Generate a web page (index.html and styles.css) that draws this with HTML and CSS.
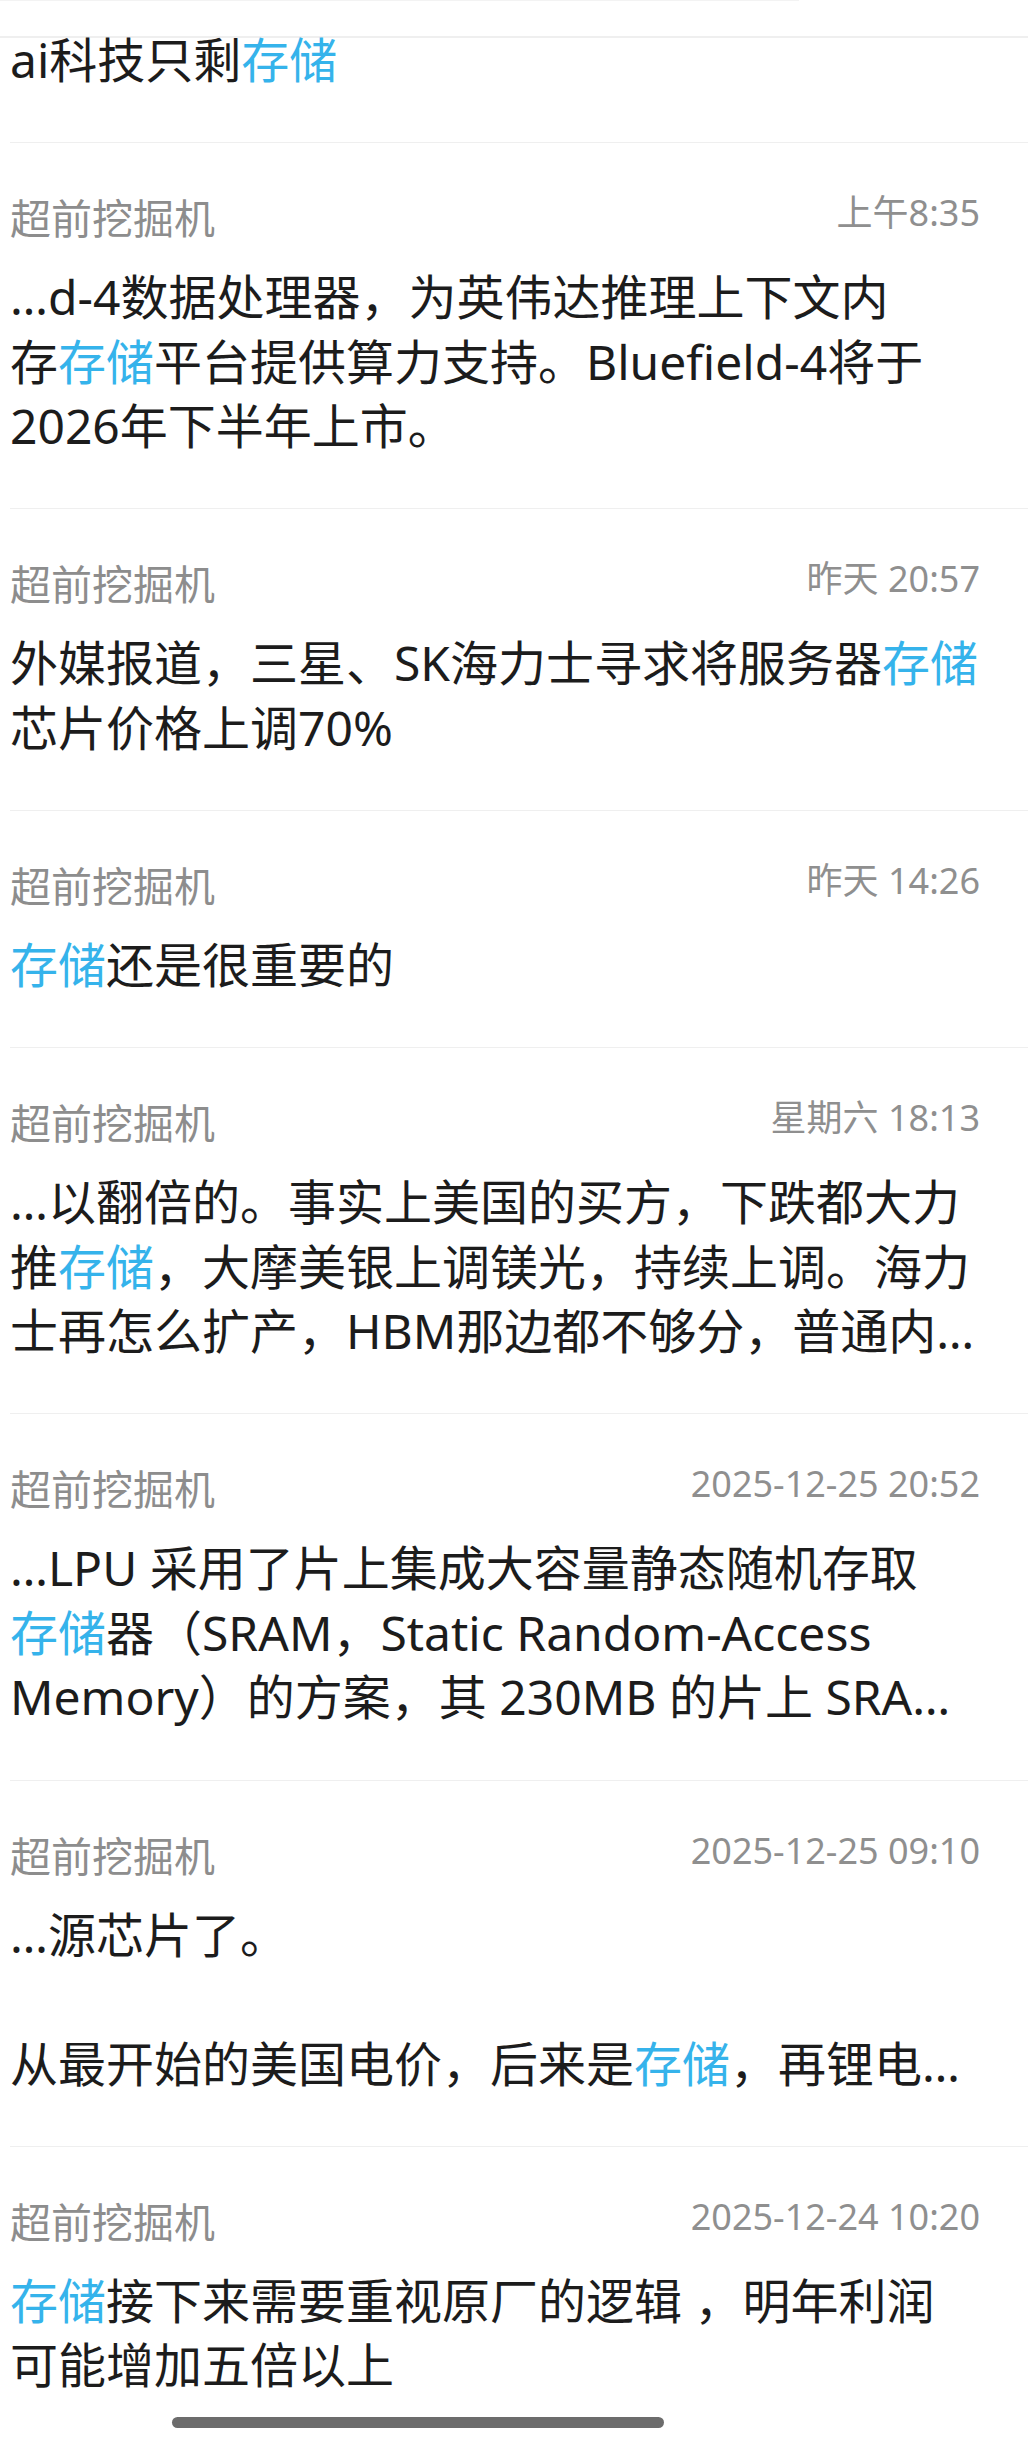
FILE: index.html
```html
<!DOCTYPE html>
<html lang="zh-CN">
<head>
<meta charset="utf-8">
<title>搜索结果</title>
<link rel="stylesheet" href="styles.css">
</head>
<body>
<div class="page">
  <div class="header"><div class="hdr-line"></div></div>

  <div class="item partial">
    <div class="body">ai科技只剩<span class="hl">存储</span></div>
  </div>

  <div class="item">
    <div class="meta"><span class="name">超前挖掘机</span><span class="time">上午8:35</span></div>
    <div class="body">…d-4数据处理器，为英伟达推理上下文内<br>存<span class="hl">存储</span>平台提供算力支持。Bluefield-4将于<br>2026年下半年上市。</div>
  </div>

  <div class="item">
    <div class="meta"><span class="name">超前挖掘机</span><span class="time">昨天 20:57</span></div>
    <div class="body">外媒报道，三星、SK海力士寻求将服务器<span class="hl">存储</span><br>芯片价格上调70%</div>
  </div>

  <div class="item">
    <div class="meta"><span class="name">超前挖掘机</span><span class="time">昨天 14:26</span></div>
    <div class="body"><span class="hl">存储</span>还是很重要的</div>
  </div>

  <div class="item">
    <div class="meta"><span class="name">超前挖掘机</span><span class="time">星期六 18:13</span></div>
    <div class="body">…以翻倍的。事实上美国的买方，下跌都大力<br>推<span class="hl">存储</span>，大摩美银上调镁光，持续上调。海力<br>士再怎么扩产，HBM那边都不够分，普通内…</div>
  </div>

  <div class="item">
    <div class="meta"><span class="name">超前挖掘机</span><span class="time">2025-12-25 20:52</span></div>
    <div class="body">…LPU 采用了片上集成大容量静态随机存取<br><span class="hl">存储</span>器（SRAM，Static Random-Access<br>Memory）的方案，其 230MB 的片上 SRA…</div>
  </div>

  <div class="item">
    <div class="meta"><span class="name">超前挖掘机</span><span class="time">2025-12-25 09:10</span></div>
    <div class="body">…源芯片了。<br><br>从最开始的美国电价，后来是<span class="hl">存储</span>，再锂电…</div>
  </div>

  <div class="item">
    <div class="meta"><span class="name">超前挖掘机</span><span class="time">2025-12-24 10:20</span></div>
    <div class="body"><span class="hl">存储</span>接下来需要重视原厂的逻辑 ，明年利润<br>可能增加五倍以上</div>
  </div>

  <div class="home-bar"></div>
</div>
</body>
</html>
```

FILE: styles.css
```css
html, body {
  margin: 0;
  padding: 0;
  background: #ffffff;
}

body {
  width: 1028px;
  height: 2448px;
  overflow: hidden;
  font-family: "Noto Sans", "Noto Sans CJK SC", sans-serif;
  color: #1c1c1c;
}

.page {
  position: relative;
  width: 1028px;
  height: 2448px;
}

.header {
  height: 36px;
  border-bottom: 2px solid #efefef;
  background: #ffffff;
}

.hdr-line {
  width: 799px;
  height: 1px;
  background: #f3f3f3;
}

.item {
  margin-left: 10px;
  padding: 47px 48px 49.7px 0;
  border-bottom: 1px solid #efefef;
}

.item.partial {
  margin-top: -10px;
  padding-top: 0;
}

.meta {
  display: flex;
  justify-content: space-between;
  align-items: flex-start;
  height: 56px;
}

.name {
  font-size: 41px;
  line-height: 56px;
  color: #8d8d8d;
}

.time {
  font-size: 36px;
  line-height: 46.5px;
  color: #8f8f8f;
}

.body {
  margin-top: 19px;
  font-size: 48px;
  line-height: 64.5px;
  white-space: nowrap;
}

.partial .body {
  margin-top: 0;
}

.hl {
  color: #35b3eb;
}

.home-bar {
  position: absolute;
  left: 172px;
  top: 2417px;
  width: 492px;
  height: 11px;
  border-radius: 6px;
  background: #6c6c6c;
}
```
